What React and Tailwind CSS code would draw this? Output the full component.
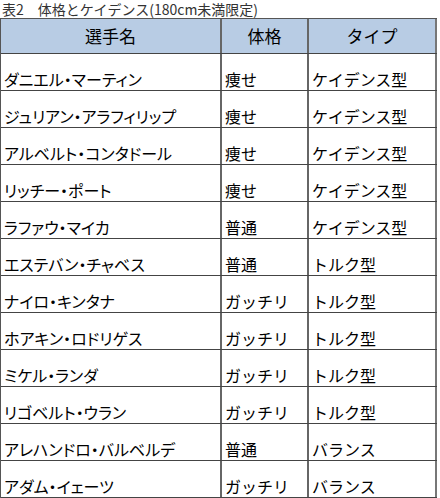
const rows = [
  ["ダニエル・マーティン", "痩せ", "ケイデンス型"],
  ["ジュリアン・アラフィリップ", "痩せ", "ケイデンス型"],
  ["アルベルト・コンタドール", "痩せ", "ケイデンス型"],
  ["リッチー・ポート", "痩せ", "ケイデンス型"],
  ["ラファウ・マイカ", "普通", "ケイデンス型"],
  ["エステバン・チャベス", "普通", "トルク型"],
  ["ナイロ・キンタナ", "ガッチリ", "トルク型"],
  ["ホアキン・ロドリゲス", "ガッチリ", "トルク型"],
  ["ミケル・ランダ", "ガッチリ", "トルク型"],
  ["リゴベルト・ウラン", "ガッチリ", "トルク型"],
  ["アレハンドロ・バルベルデ", "普通", "バランス"],
  ["アダム・イェーツ", "ガッチリ", "バランス"],
];

const font = { fontFamily: '"Noto Sans CJK JP", "Liberation Sans", sans-serif' };

export default function App() {
  return (
    <div className="h-[498px] w-[440px] overflow-hidden bg-white text-black" style={font}>
      <div className="flex h-[18px] items-end pl-[2px] text-[14px] leading-[17px] text-[#333]">
        表2　体格とケイデンス(180cm未満限定)
      </div>
      <div className="w-[437px] border-l border-t border-[#555]">
        <div className="grid h-[35px] grid-cols-[221px_87px_128px] border-b border-[#444] bg-[#b8cce4] text-[17px]">
          <div className="flex items-center justify-center border-r-2 border-[#666]">選手名</div>
          <div className="flex items-center justify-center border-r-2 border-[#666]">体格</div>
          <div className="flex items-center justify-center border-r-2 border-[#777]">タイプ</div>
        </div>
        {rows.map((r) => (
          <div
            key={r[0]}
            className="grid h-[37px] grid-cols-[221px_87px_128px] border-b border-[#444] text-[16px] leading-[20px]"
          >
            <div className="flex items-end whitespace-nowrap border-r-2 border-[#666] pb-[1px] pl-[3px] [font-feature-settings:'palt']">{r[0]}</div>
            <div className="flex items-end whitespace-nowrap border-r-2 border-[#666] pb-[1px] pl-[3px]">{r[1]}</div>
            <div className="flex items-end whitespace-nowrap border-r-2 border-[#777] pb-[1px] pl-[3px]">{r[2]}</div>
          </div>
        ))}
      </div>
    </div>
  );
}
